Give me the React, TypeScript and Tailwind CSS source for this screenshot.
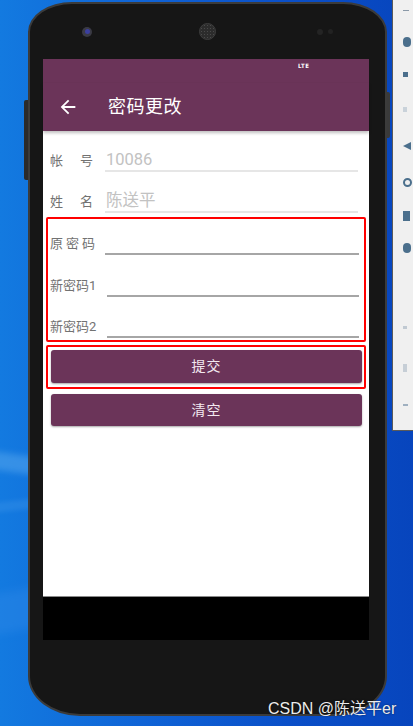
import React from 'react';

const PURPLE = 'bg-[#6b3459]';

const FieldRow: React.FC<{ label: React.ReactNode; value?: string; strong?: boolean; height: string; inputMl?: string }> = ({
  label,
  value,
  strong,
  height,
  inputMl = 'ml-0',
}) => (
  <div className={`flex items-end ${height}`}>
    <div className="w-[55px] shrink-0 mb-[1px] text-[13px] leading-[20px] text-[#727272]">{label}</div>
    <div className={`flex-1 flex flex-col ${inputMl}`}>
      <div className="h-[20px] leading-[20px] text-[16.5px] text-[#c2c2c2] pl-[1px]">{value}</div>
      <div className={strong ? 'h-[2px] bg-[#a6a6a6]' : 'h-[2px] bg-[#e6e6e6]'} />
    </div>
  </div>
);

const SpreadLabel: React.FC<{ a: string; b: string }> = ({ a, b }) => (
  <div className="flex justify-between w-[43px]">
    <span>{a}</span>
    <span>{b}</span>
  </div>
);

const PhoneScreen: React.FC = () => (
  <div className="ml-[13px] w-[326px] h-[581px] flex flex-col bg-white">
    {/* status bar */}
    <div className={`h-[24px] ${PURPLE} flex items-start pt-[3px]`}>
      <span className="ml-[255px] text-[6px] font-bold leading-[8px] text-white tracking-[0.5px] [font-family:'DejaVu_Sans_Condensed',sans-serif]">LTE</span>
    </div>
    {/* toolbar */}
    <div className={`h-[48px] ${PURPLE} flex items-center relative z-10 shadow-[0_2px_3px_rgba(0,0,0,0.25)]`}>
      <svg width="22" height="22" viewBox="0 0 24 24" className="ml-[14px] fill-white">
        <path d="M20 11H7.83l5.59-5.59L12 4l-8 8 8 8 1.41-1.41L7.83 13H20v-2z" />
      </svg>
      <span className="ml-[29px] text-[18px] text-white leading-[24px] tracking-[0.5px]">密码更改</span>
    </div>
    {/* form */}
    <div className="flex-1 flex flex-col px-[3px]">
      <div className="pl-[4px] pr-[8px]">
        <FieldRow height="h-[41px]" label={<SpreadLabel a="帐" b="号" />} value="10086" />
        <FieldRow height="h-[41px]" label={<SpreadLabel a="姓" b="名" />} value="陈送平" />
      </div>
      <div className="mt-[4px] border-2 border-[#ff0000] rounded-[2px] pl-[2px] pr-[5px] pb-[2px]">
        <FieldRow height="h-[36px]" strong label={<span className="tracking-[3px]">原密码</span>} />
        <FieldRow height="h-[42px]" strong inputMl="ml-[2px]" label="新密码1" />
        <FieldRow height="h-[41px]" strong inputMl="ml-[2px]" label="新密码2" />
      </div>
      <div className="mt-[3px] border-2 border-[#ff0000] rounded-[2px] pl-[3px] pr-[2px] pt-[3px] pb-[4px]">
        <button className={`w-full h-[33px] rounded-[3px] ${PURPLE} text-[14px] text-[#f3e9f0] tracking-[1px] shadow-[0_1px_2px_rgba(0,0,0,0.35)]`}>
          提交
        </button>
      </div>
      <button className={`mt-[5px] ml-[5px] w-[311px] h-[32px] rounded-[3px] ${PURPLE} text-[14px] text-[#f3e9f0] tracking-[1px] shadow-[0_1px_2px_rgba(0,0,0,0.35)]`}>
        清空
      </button>
    </div>
    {/* nav bar */}
    <div className="h-[44px] bg-black border-t border-[#8a8a8a]" />
  </div>
);

const Phone: React.FC = () => (
  <div className="relative w-[359px] h-[714px] border-2 border-[#3b3b3b] bg-[#161616] rounded-[44px_44px_52px_52px/30px_30px_40px_40px] flex flex-col">
    {/* side buttons */}
    <div className="absolute left-[-6px] top-[96px] w-[4px] h-[80px] bg-[#2b2b2b] rounded-l-[2px]" />
    <div className="absolute right-[-5px] top-[88px] w-[3px] h-[46px] bg-[#3a3a3a] rounded-r-[2px]" />
    {/* top bezel */}
    <div className="h-[55px] flex items-center">
      <div className="ml-[52px] w-[10px] h-[10px] rounded-full bg-[#3a3a44] flex items-center justify-center">
        <div className="w-[5px] h-[5px] rounded-full bg-[#3b3fa0]" />
      </div>
      <div className="ml-[107px] w-[17px] h-[17px] rounded-full bg-[#2c2c2c] border border-[#3d3d3d] bg-[radial-gradient(#4a4a4a_1px,transparent_1px)] bg-[length:3px_3px]" />
      <div className="ml-[101px] w-[6px] h-[6px] rounded-full bg-[#242424]" />
      <div className="ml-[5px] w-[5px] h-[5px] rounded-full bg-[#222]" />
    </div>
    <PhoneScreen />
  </div>
);

const SidePanel: React.FC = () => (
  <div className="absolute left-[392px] top-[-1px] w-[30px] h-[432px] bg-[#f0f0f0] border border-[#5a5a5a] flex flex-col items-start pl-[10px]">
    <div className="mt-[10px] w-[6px] h-[1px] bg-[#8a99a8]" />
    <div className="mt-[26px] w-[8px] h-[10px] rounded-full bg-[#4b6f8c]" />
    <div className="mt-[25px] w-[5px] h-[5px] bg-[#4b6f8c]" />
    <div className="mt-[30px] w-[4px] h-[5px] bg-[#c9d2da]" />
    <div className="mt-[30px] w-[8px] h-[8px] bg-[#4b6f8c] [clip-path:polygon(0_50%,100%_0,100%_100%)]" />
    <div className="mt-[28px] w-[9px] h-[9px] rounded-full border-2 border-[#4b6f8c]" />
    <div className="mt-[24px] w-[7px] h-[10px] bg-[#4b6f8c]" />
    <div className="mt-[22px] w-[8px] h-[10px] rounded-full bg-[#4b6f8c]" />
    <div className="mt-[73px] w-[4px] h-[3px] bg-[#c0c9d2]" />
    <div className="mt-[35px] w-[4px] h-[8px] bg-[#c6ced6]" />
    <div className="mt-[32px] w-[5px] h-[2px] bg-[#9fb0c0]" />
  </div>
);

export default function App() {
  return (
    <div className="relative w-[413px] h-[726px] overflow-hidden pl-[28px] pt-[2px] bg-[linear-gradient(90deg,#137ae0_0%,#0f63d6_35%,#0a4fc8_70%,#0745bd_100%)] [font-family:Roboto,'Noto_Sans_CJK_SC',sans-serif]">
      {/* light rays on the wallpaper */}
      <div className="absolute left-[-40px] top-[455px] w-[120px] h-[18px] bg-[#5aa9ee] opacity-50 blur-[3px] rotate-[8deg]" />
      <div className="absolute left-[-40px] top-[500px] w-[120px] h-[10px] bg-[#3b93e8] opacity-40 blur-[2px] rotate-[-6deg]" />
      <div className="absolute left-[-40px] top-[590px] w-[120px] h-[40px] bg-[#2a86e6] opacity-50 blur-[4px] rotate-[-10deg]" />
      <Phone />
      <SidePanel />
      <div className="absolute left-[268px] top-[698px] text-[16px] leading-[22px] text-[#ececec] [text-shadow:0_0_2px_rgba(0,0,0,0.6)] [font-family:'Liberation_Sans','Noto_Sans_CJK_SC',sans-serif]">
        CSDN @陈送平er
      </div>
    </div>
  );
}
